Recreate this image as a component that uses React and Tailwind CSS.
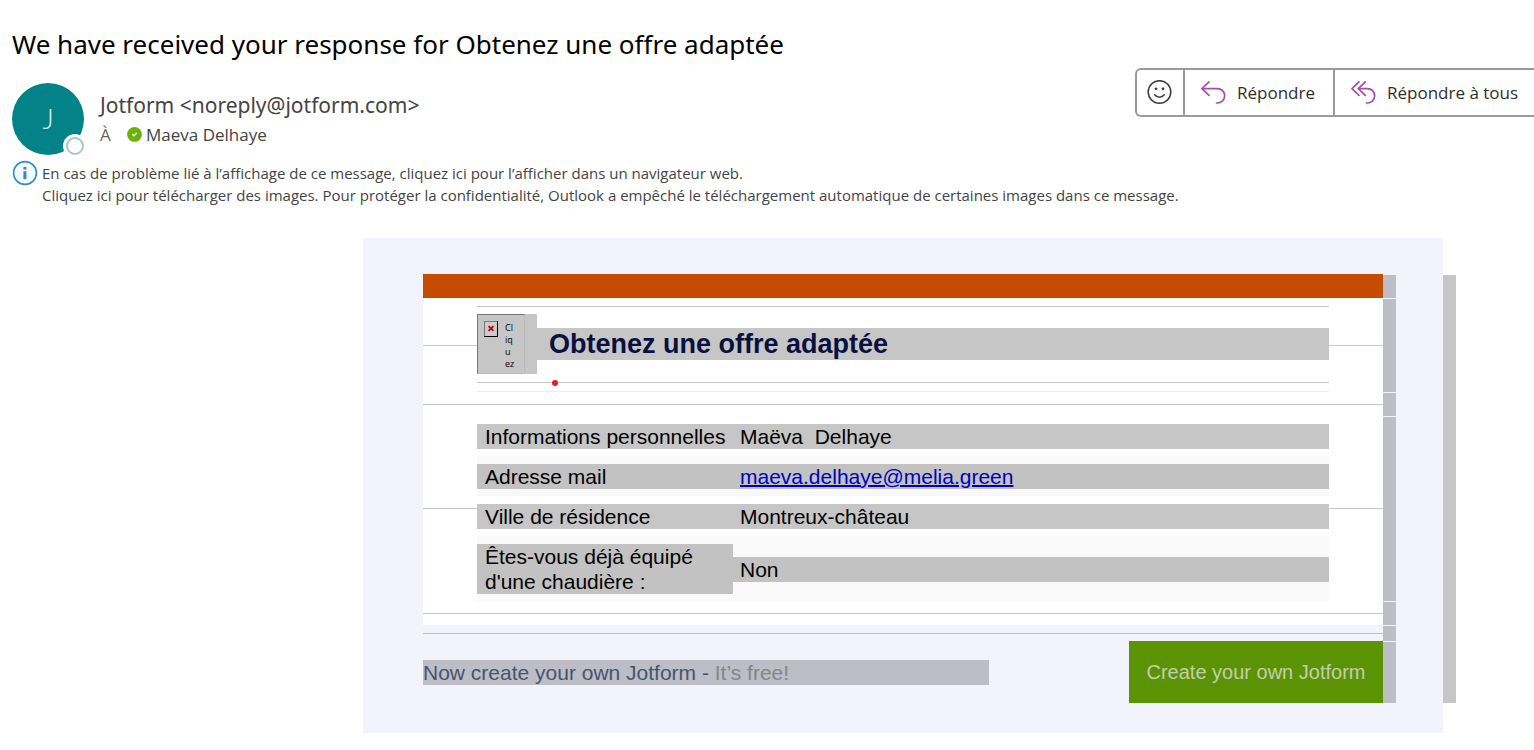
import React from "react";

const answers = [
  { label: "Informations personnelles", value: "Maëva\u00a0 Delhaye" },
  { label: "Adresse mail", value: "maeva.delhaye@melia.green", email: true },
  { label: "Ville de résidence", value: "Montreux-château" },
  { label: "Êtes-vous déjà équipé d'une chaudière :", value: "Non" },
];

function SmileIcon() {
  return (
    <svg width="26" height="26" viewBox="0 0 26 26" fill="none" stroke="#3b3b3b" strokeWidth="1.5" strokeLinecap="round" aria-hidden="true">
      <circle cx="12.500" cy="12" r="11.300" />
      <path d="M7.700 14.800c1.100 1.500 2.800 2.400 4.800 2.400s3.700-.9 4.800-2.400" />
      <circle cx="9" cy="8.800" r="1.400" fill="#3b3b3b" stroke="none" />
      <circle cx="16" cy="8.800" r="1.400" fill="#3b3b3b" stroke="none" />
    </svg>
  );
}

function ReplyIcon() {
  return (
    <svg width="26" height="26" viewBox="0 0 26 26" fill="none" stroke="#a44fae" strokeWidth="1.700" strokeLinecap="round" strokeLinejoin="round" aria-hidden="true">
      <path d="M8 1.800 1 8.600l7 6.800" />
      <path d="M1.300 8.600H16.500a7.200 7.200 0 0 1 0 14.400h-1" />
    </svg>
  );
}

function ReplyAllIcon() {
  return (
    <svg width="26" height="26" viewBox="0 0 26 26" fill="none" stroke="#a44fae" strokeWidth="1.700" strokeLinecap="round" strokeLinejoin="round" aria-hidden="true">
      <path d="M8 1.800 1 8.600l7 6.800" />
      <path d="M14.300 1.800 7.300 8.600l7 6.800" />
      <path d="M7.500 8.600h9a7.200 7.200 0 0 1 0 14.400h-1" />
    </svg>
  );
}

function Row({ className = "", children }) {
  return (
    <div className="flex">
      <div className={`min-w-0 flex-1 ${className}`}>{children}</div>
      <div className="mt-px w-[13px] bg-[#bdbdc7]" />
    </div>
  );
}

function SideLine() {
  return (
    <div className="flex w-[54px] shrink-0 items-center">
      <div className="h-px w-full bg-[#c6c6c6]" />
    </div>
  );
}

function Header() {
  return (
    <header className="pt-[26px] pl-3 text-[#444]">
      <h1 className="font-['Noto_Sans',sans-serif] text-[26px] leading-[36px] text-black">
        We have received your response for Obtenez une offre adaptée
      </h1>
      <div className="mt-[6px] flex items-start justify-between">
        <div className="mt-[15px] flex">
          <div className="relative flex size-[72px] items-center justify-center rounded-full bg-[#038387] font-['Lato',sans-serif] text-[27px] font-light text-[#e6f3f3]">
            J
            <span className="absolute -right-[3px] -bottom-[3px] flex size-6 items-center justify-center rounded-full bg-white">
              <span className="size-[18px] rounded-full border-2 border-[#a9c3cc]" />
            </span>
          </div>
          <div className="ml-4 pt-2">
            <p className="font-['Noto_Sans',sans-serif] text-[21px] leading-[29px]">Jotform &lt;noreply@jotform.com&gt;</p>
            <p className="flex items-center text-[17px] leading-[29px]">
              <span className="w-[27px] text-[#666]">À</span>
              <svg width="15" height="15" viewBox="0 0 15 15" className="mr-1" aria-hidden="true">
                <circle cx="7.500" cy="7.400" r="7.400" fill="#6bb10a" />
                <path d="m5.300 7.300 1.600 1.500 2.800-2.800" fill="none" stroke="#fff" strokeWidth="1.300" />
              </svg>
              <span>Maeva Delhaye</span>
            </p>
          </div>
        </div>
        <div className="flex h-[49px] w-[399px] shrink-0 overflow-hidden rounded-l-md border-2 border-r-0 border-[#9a9a9a] text-[17px] text-[#2f2f2f]">
          <button aria-label="Réagir" className="flex w-12 shrink-0 items-center justify-center border-r-2 border-[#9a9a9a]">
            <SmileIcon />
          </button>
          <button className="flex w-[150px] shrink-0 items-center gap-[10px] border-r-2 border-[#9a9a9a] pl-4 whitespace-nowrap">
            <ReplyIcon />
            Répondre
          </button>
          <button className="flex flex-1 items-center gap-[10px] pl-4 whitespace-nowrap">
            <ReplyAllIcon />
            Répondre à tous
          </button>
        </div>
      </div>
      <div className="mt-[5px] flex gap-1 text-[15px] leading-[22px]">
        <svg width="26" height="26" viewBox="0 0 26 26" className="shrink-0" aria-hidden="true">
          <circle cx="13" cy="13" r="11.400" fill="#f4fafd" stroke="#2f8bc9" strokeWidth="1.600" />
          <path d="M11.400 7h3v2.500h-3zM11.400 11.200h3v8h-3z" fill="#2f8bc9" />
        </svg>
        <p className="pt-[2px]">
          En cas de problème lié à l’affichage de ce message, cliquez ici pour l’afficher dans un navigateur web.
          <br />
          Cliquez ici pour télécharger des images. Pour protéger la confidentialité, Outlook a empêché le téléchargement automatique de certaines images dans ce message.
        </p>
      </div>
    </header>
  );
}

function FormHeading() {
  return (
    <div className="flex">
      <SideLine />
      <div className="min-w-0 flex-1 pt-2">
        <div className="h-px bg-[#c6c6c6]" />
        <div className="mt-[7px] flex items-center">
          <div className="h-[60px] w-[60px] shrink-0 bg-[#c6c6c6]">
            <div className="flex h-[60px] w-12 gap-[7px] border border-t-[#777] border-r-[#bbb] border-b-[#bbb] border-l-[#777] pt-[6px] pl-[6px]">
              <svg width="14" height="16" viewBox="0 0 14 16" className="shrink-0" aria-hidden="true">
                <path d="M0 0h14v16H0z" fill="#000" />
                <path d="M0 0h13v15H0z" fill="#777" />
                <path d="M1 1h12v14H1z" fill="#ccc" />
                <path d="m4.500 5.200 5 4.600M9.500 5.200l-5 4.600" stroke="#c40000" strokeWidth="1.700" />
              </svg>
              <p className="pt-px font-['Open_Sans',sans-serif] text-[9px] leading-3 text-black">
                Cl<br />iq<br />u<br />ez
              </p>
            </div>
          </div>
          <h2 className="flex-1 bg-[#c6c6c6] pl-3 text-[27px] leading-[32px] font-bold text-[#081040]">
            Obtenez une offre adaptée
          </h2>
        </div>
        <div className="relative mt-2 h-px bg-[#c6c6c6]">
          <span className="absolute -top-[2px] left-[75px] size-[6px] rounded-full bg-[#de1f26]" />
        </div>
        <div className="mt-2 h-px bg-[#ececec]" />
      </div>
      <SideLine />
    </div>
  );
}

function Answers() {
  return (
    <div className="flex">
      <SideLine />
      <table className="min-w-0 flex-1 table-fixed border-collapse text-left text-[21px] leading-[25px] text-black">
        <colgroup>
          <col className="w-[256px]" />
          <col />
        </colgroup>
        <tbody>
          {answers.map((a) => (
            <tr key={a.label} className="group even:bg-[#f9f9f9]">
              <th scope="row" className="p-0 pt-2 pb-[7px] align-middle font-normal">
                <div className="bg-[#c6c6c6] pl-2 group-even:bg-[#c2c2c2]">{a.label}</div>
              </th>
              <td className="p-0 pt-2 pb-[7px] align-middle">
                <div className="bg-[#c6c6c6] pl-[7px] group-even:bg-[#c2c2c2]">
                  {a.email ? (
                    <a href={`mailto:${a.value}`} className="text-[#0000c0] underline decoration-2">
                      {a.value}
                    </a>
                  ) : (
                    a.value
                  )}
                </div>
              </td>
            </tr>
          ))}
        </tbody>
      </table>
      <SideLine />
    </div>
  );
}

export default function App() {
  return (
    <div className="min-h-screen overflow-x-hidden bg-white pb-[17px] font-['Open_Sans',sans-serif]">
      <Header />
      <main className="mt-8 mr-[78px] ml-[363px] flex font-['Liberation_Sans',sans-serif]">
        <div className="min-w-0 flex-1 bg-[#f3f3fe] pt-9 pr-[47px] pb-[30px] pl-[60px]">
          <Row className="h-6 bg-[#c54b00]" />
          <Row className="bg-white">
            <FormHeading />
          </Row>
          <Row className="bg-white pt-3 pb-[11px]">
            <div className="h-px bg-[#c6c6c6]" />
          </Row>
          <Row className="bg-white">
            <Answers />
          </Row>
          <Row className="bg-white pt-3 pb-[11px]">
            <div className="h-px bg-[#c6c6c6]" />
          </Row>
          <Row className="pt-2 pb-[7px]">
            <div className="h-px bg-[#bdbdc7]" />
          </Row>
          <Row className="flex items-center justify-between">
            <p className="w-[566px] bg-[#bdbdc7] text-[21px] leading-[25px] text-[#47546a]">
              Now create your own Jotform - <span className="text-[#858585]">It’s free!</span>
            </p>
            <a href="#create" className="flex h-[62px] w-[254px] items-center justify-center bg-[#5c9304] text-[20px] text-[#c3ceb0]">
              Create your own Jotform
            </a>
          </Row>
        </div>
        <div className="mt-[37px] mb-[30px] w-[13px] bg-[#c6c6c6]" />
      </main>
    </div>
  );
}
